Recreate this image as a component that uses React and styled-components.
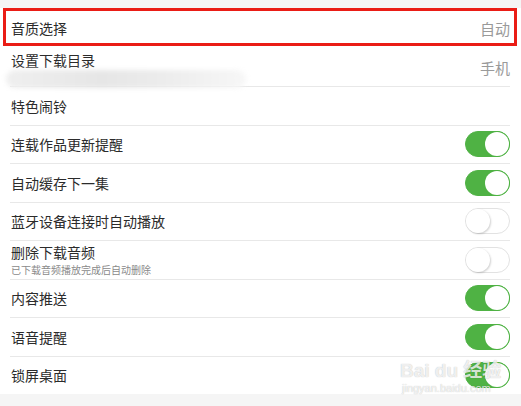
import React from "react";
import styled, { createGlobalStyle } from "styled-components";

const GlobalStyle = createGlobalStyle`
  html, body {
    margin: 0;
    padding: 0;
    background: #f5f5f5;
    font-family: "Noto Sans CJK SC", "Noto Sans", sans-serif;
  }
`;

const Page = styled.div`
  position: relative;
  width: 521px;
  height: 406px;
  padding-top: 8px;
  box-sizing: border-box;
  background: #f5f5f5;
  overflow: hidden;
`;

const List = styled.div`
  background: #fff;
  padding: 0 11px 0 10px;
`;

const Row = styled.div`
  position: relative;
  display: flex;
  align-items: center;
  justify-content: space-between;
  height: ${(p) => p.$height || 37.5}px;
  border-bottom: ${(p) => (p.$noLine ? "none" : "1px solid #e8e8e8")};
  padding-left: 1px;
`;

const Texts = styled.div`
  display: flex;
  flex-direction: column;
  margin-top: ${(p) => p.$shift || 0}px;
`;

const Title = styled.div`
  font-size: 14px;
  line-height: 18px;
  color: #2b2b2b;
`;

const Sub = styled.div`
  font-size: 10px;
  line-height: 14px;
  color: #8a8a8a;
  margin-top: 2px;
`;

const Value = styled.div`
  font-size: 15px;
  color: #9a9a9a;
`;

const Smudge = styled.div`
  position: absolute;
  left: -4px;
  top: 22px;
  width: 240px;
  height: 18px;
  border-radius: 9px;
  background: linear-gradient(90deg, #efefef, #e6e6e6 40%, #ececec 65%, #f7f7f7);
  filter: blur(2.5px);
`;

const Track = styled.div`
  position: relative;
  width: 45px;
  height: 26px;
  border-radius: 13px;
  box-sizing: border-box;
  background: ${(p) => (p.$on ? "#4fb244" : "#fff")};
  border: 1px solid ${(p) => (p.$on ? "#4fb244" : "#e2e2e2")};
`;

const Knob = styled.div`
  position: absolute;
  top: 0;
  ${(p) => (p.$on ? "right: 0;" : "left: 0;")}
  width: 24px;
  height: 24px;
  border-radius: 50%;
  background: #fff;
  box-shadow: ${(p) =>
    p.$on ? "0 0 0 1px #4fb244" : "1px 1px 2px rgba(0,0,0,0.18)"};
`;

const Highlight = styled.div`
  position: absolute;
  left: 3px;
  top: 8px;
  width: 514px;
  height: 38px;
  box-sizing: border-box;
  border: 3px solid #ea1d16;
`;

const Watermark = styled.div`
  position: absolute;
  left: 400px;
  top: 361px;
  white-space: nowrap;
  color: rgba(255, 255, 255, 0.8);
  text-shadow: 0 0 1px rgba(0, 0, 0, 0.3);
  font-family: "Liberation Sans", "Noto Sans CJK SC", sans-serif;
  line-height: 1;
`;

const MarkBig = styled.div`
  font-size: 19px;
  font-weight: bold;
`;

const MarkSmall = styled.div`
  font-size: 11px;
  margin-top: 3px;
  padding-left: 2px;
`;

const Toggle = ({ on }) => (
  <Track $on={on}>
    <Knob $on={on} />
  </Track>
);

const toggles = [
  { title: "连载作品更新提醒", on: true },
  { title: "自动缓存下一集", on: true },
  { title: "蓝牙设备连接时自动播放", on: false },
  { title: "删除下载音频", sub: "已下载音频播放完成后自动删除", on: false },
  { title: "内容推送", on: true },
  { title: "语音提醒", on: true },
  { title: "锁屏桌面", on: true },
];

export default function App() {
  return (
    <>
      <GlobalStyle />
      <Page>
        <List>
          <Row $height={40} $noLine>
            <Title>音质选择</Title>
            <Value>自动</Value>
          </Row>
          <Row $height={38}>
            <Texts $shift={-14}>
              <Title>设置下载目录</Title>
            </Texts>
            <Smudge />
            <Value>手机</Value>
          </Row>
          <Row>
            <Title>特色闹铃</Title>
          </Row>
          {toggles.map((t, i) => (
            <Row key={t.title} $noLine={i === toggles.length - 1}>
              <Texts>
                <Title>{t.title}</Title>
                {t.sub && <Sub>{t.sub}</Sub>}
              </Texts>
              <Toggle on={t.on} />
            </Row>
          ))}
        </List>
        <Highlight />
        <Watermark>
          <MarkBig>Bai du 经验</MarkBig>
          <MarkSmall>jingyan.baidu.com</MarkSmall>
        </Watermark>
      </Page>
    </>
  );
}
